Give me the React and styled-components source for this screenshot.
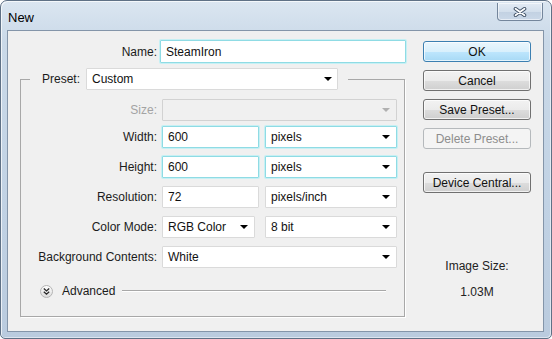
import React from "react";
import styled, { createGlobalStyle } from "styled-components";

const Global = createGlobalStyle`
  html, body { margin: 0; padding: 0; background: #ffffff; }
  * { box-sizing: border-box; }
  body { font-family: "Liberation Sans", Arial, sans-serif; font-size: 12px; color: #1b1b1b; }
`;

export default function App() {
  return (
    <>
      <Global />
      <Window>
        <TitleBar>
          <Title>New</Title>
          <CloseButton>
            <svg width="14" height="10" viewBox="-7 -5 14 10">
              <path d="M-4.5,-3.2 L4.5,3.2 M4.5,-3.2 L-4.5,3.2" stroke="#3d4e63" strokeWidth="3.6" strokeLinecap="round" />
              <path d="M-4.5,-3.2 L4.5,3.2 M4.5,-3.2 L-4.5,3.2" stroke="#ffffff" strokeWidth="1.8" strokeLinecap="round" />
            </svg>
          </CloseButton>
        </TitleBar>
        <Client>
          <FormColumn>
            <NameRow>
              <NameLabel>Name:</NameLabel>
              <TextField $w={246} $h={23} $focus readOnly value="SteamIron" />
            </NameRow>
            <PresetSet>
              <Legend>
                <span>Preset:</span>
                <Select $w={252} $pr={5}>
                  Custom
                  <Caret />
                </Select>
              </Legend>
              <Rows>
                <Row $mb={-3}>
                  <Label $disabled>Size:</Label>
                  <Select $w={235} $disabled>
                    <span />
                    <Caret $disabled />
                  </Select>
                </Row>
                <Row>
                  <Label>Width:</Label>
                  <TextField $w={97} $focus readOnly value="600" />
                  <Select $w={132} $focus>
                    pixels
                    <Caret />
                  </Select>
                </Row>
                <Row>
                  <Label>Height:</Label>
                  <TextField $w={97} $focus readOnly value="600" />
                  <Select $w={132} $focus>
                    pixels
                    <Caret />
                  </Select>
                </Row>
                <Row>
                  <Label>Resolution:</Label>
                  <TextField $w={97} readOnly value="72" />
                  <Select $w={132}>
                    pixels/inch
                    <Caret />
                  </Select>
                </Row>
                <Row>
                  <Label>Color Mode:</Label>
                  <Select $w={93}>
                    RGB Color
                    <Caret />
                  </Select>
                  <Select $w={132} $ml={4}>
                    8 bit
                    <Caret />
                  </Select>
                </Row>
                <Row>
                  <Label>Background Contents:</Label>
                  <Select $w={235}>
                    White
                    <Caret />
                  </Select>
                </Row>
              </Rows>
              <AdvancedRow>
                <ExpandIcon>
                  <svg width="9" height="9" viewBox="0 0 9 9">
                    <path d="M1.8,1.6 L4.5,4 L7.2,1.6 M1.8,4.8 L4.5,7.2 L7.2,4.8" fill="none" stroke="#2a2a2a" strokeWidth="1.3" />
                  </svg>
                </ExpandIcon>
                <span>Advanced</span>
                <Rule />
              </AdvancedRow>
            </PresetSet>
          </FormColumn>
          <ButtonColumn>
            <Button $primary>OK</Button>
            <Button>Cancel</Button>
            <Button>Save Preset...</Button>
            <Button disabled>Delete Preset...</Button>
            <Button $mt={15}>Device Central...</Button>
            <SizeInfo>
              <div>Image Size:</div>
              <div>1.03M</div>
            </SizeInfo>
          </ButtonColumn>
        </Client>
      </Window>
    </>
  );
}

const Window = styled.div`
  width: 552px;
  height: 339px;
  border: 1px solid #5f7186;
  border-radius: 7px 7px 5px 5px;
  background: linear-gradient(to bottom, #dbe6f1 0%, #cad9e8 12%, #c1d2e4 60%, #bacbde 100%);
  box-shadow: inset 1px 1px 0 rgba(255, 255, 255, 0.7), inset -1px -1px 0 rgba(255, 255, 255, 0.5);
  display: flex;
  flex-direction: column;
  overflow: hidden;
`;

const TitleBar = styled.div`
  height: 29px;
  display: flex;
  align-items: flex-start;
  padding-left: 7px;
`;

const Title = styled.div`
  padding-top: 9px;
  font-family: "Liberation Sans", Arial, sans-serif;
  font-size: 13px;
  color: #000;
`;

const CloseButton = styled.div`
  margin-left: auto;
  margin-right: 8px;
  margin-top: 2px;
  width: 46px;
  height: 18px;
  border: 1px solid #74869c;
  border-top: none;
  border-radius: 0 0 4px 4px;
  background: linear-gradient(to bottom, #e3ebf4 0%, #d3dfec 50%, #c2d1e2 51%, #cad8e8 100%);
  box-shadow: inset 0 0 0 1px rgba(255, 255, 255, 0.55);
  display: flex;
  align-items: center;
  justify-content: center;
`;

const Client = styled.div`
  flex: 1;
  margin: 0 7px 6px 6px;
  border: 1px solid #8495a9;
  background: #f0f0f0;
  display: flex;
  justify-content: space-between;
`;

const FormColumn = styled.div`
  width: 398px;
  padding-top: 9px;
  display: flex;
  flex-direction: column;
`;

const NameRow = styled.div`
  display: flex;
  align-items: center;
  gap: 3px;
`;

const NameLabel = styled.span`
  width: 149px;
  text-align: right;
`;

const fieldBorder = (p) =>
  p.$focus
    ? "border: 1px solid #8fdbe4; box-shadow: 0 0 0 1px #c6f0f4;"
    : p.$disabled
    ? "border: 1px solid #d2d2d2;"
    : "border: 1px solid #dadada;";

const TextField = styled.input`
  width: ${(p) => p.$w}px;
  height: ${(p) => p.$h || 22}px;
  padding: 0 5px;
  font: inherit;
  color: #111;
  background: #fff;
  outline: none;
  border-radius: 1px;
  ${fieldBorder}
`;

const Select = styled.div`
  width: ${(p) => p.$w}px;
  height: 22px;
  margin-left: ${(p) => p.$ml || 0}px;
  padding: 0 ${(p) => p.$pr || 6}px 0 5px;
  display: flex;
  align-items: center;
  justify-content: space-between;
  background: ${(p) => (p.$disabled ? "#f0f0f0" : "#fff")};
  color: #111;
  border-radius: 1px;
  ${fieldBorder}
`;

const Caret = styled.span`
  width: 0;
  height: 0;
  border-left: 4px solid transparent;
  border-right: 4px solid transparent;
  border-top: 4px solid ${(p) => (p.$disabled ? "#b0b0b0" : "#000")};
`;

const PresetSet = styled.fieldset`
  margin: 5px 0 0 12px;
  width: 385px;
  padding: 0 0 18px 0;
  border: 1px solid #a8a8a8;
  box-shadow: 1px 1px 0 #ffffff;
  min-width: 0;
`;

const Legend = styled.legend`
  margin-left: 9px;
  padding: 0 10px 0 12px;
  display: flex;
  align-items: center;
  gap: 6px;
`;

const Rows = styled.div`
  padding-top: 9px;
  display: flex;
  flex-direction: column;
  gap: 8px;
`;

const Row = styled.div`
  display: flex;
  align-items: center;
  gap: 6px;
  margin-bottom: ${(p) => p.$mb || 0}px;
`;

const Label = styled.span`
  width: 136px;
  margin-right: -1px;
  text-align: right;
  color: ${(p) => (p.$disabled ? "#a3a3a3" : "#1b1b1b")};
`;

const AdvancedRow = styled.div`
  margin-top: 16px;
  padding: 0 18px 0 19px;
  display: flex;
  align-items: center;
  gap: 9px;
`;

const ExpandIcon = styled.span`
  width: 13px;
  height: 13px;
  border-radius: 50%;
  border: 1px solid #b4b4b4;
  background: linear-gradient(to bottom, #ffffff, #dcdcdc);
  display: flex;
  align-items: center;
  justify-content: center;
`;

const Rule = styled.span`
  flex: 1;
  margin-left: -2px;
  height: 0;
  border-top: 1px solid #a8a8a8;
  border-bottom: 1px solid #ffffff;
`;

const ButtonColumn = styled.div`
  width: 108px;
  margin-right: 12px;
  padding-top: 10px;
  display: flex;
  flex-direction: column;
  gap: 8px;
`;

const Button = styled.button`
  height: 21px;
  margin-top: ${(p) => p.$mt || 0}px;
  font: inherit;
  color: ${(p) => (p.disabled ? "#8d8d8d" : "#111")};
  border-radius: 3px;
  padding: 0;
  border: 1px solid ${(p) => (p.$primary ? "#3c7fb1" : p.disabled ? "#b5b9bc" : "#707070")};
  background: ${(p) =>
    p.$primary
      ? "linear-gradient(to bottom, #eaf6fd 0%, #d9f0fc 50%, #bee6fd 51%, #a7d9f5 100%)"
      : p.disabled
      ? "#f4f4f4"
      : "linear-gradient(to bottom, #f2f2f2 0%, #ebebeb 50%, #dddddd 51%, #cfcfcf 100%)"};
  box-shadow: ${(p) => (p.disabled ? "none" : "inset 0 0 0 1px rgba(255,255,255,0.7)")};
`;

const SizeInfo = styled.div`
  margin-top: 52px;
  text-align: center;
  line-height: 26px;
  color: #222;
`;
